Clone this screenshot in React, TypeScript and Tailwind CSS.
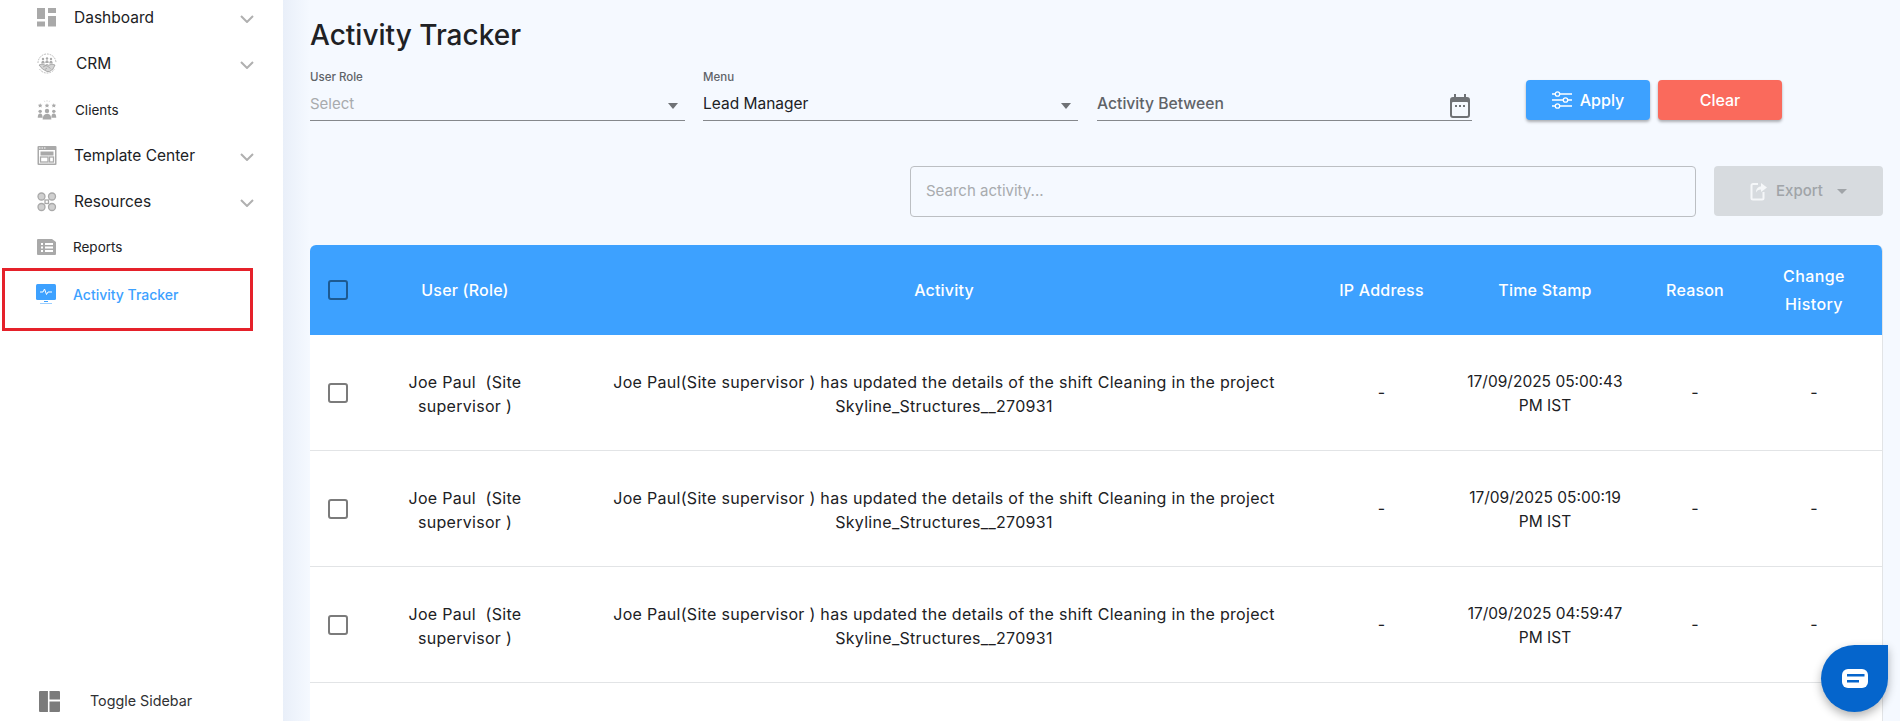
const font = "font-['Inter','Noto_Sans',sans-serif]";

const navItems = [
  { label: "Dashboard", icon: <DashboardIcon />, caret: true, labelClass: "ml-[17px] text-[15.500px]" },
  { label: "CRM", icon: <CrmIcon />, caret: true, labelClass: "ml-[19px] text-[15.500px]" },
  { label: "Clients", icon: <ClientsIcon />, caret: false, labelClass: "ml-[18px] text-[13.500px]" },
  { label: "Template Center", icon: <TemplateIcon />, caret: true, labelClass: "ml-[17px] text-[15.500px]" },
  { label: "Resources", icon: <ResourcesIcon />, caret: true, labelClass: "ml-[17px] text-[15.500px]" },
  { label: "Reports", icon: <ReportsIcon />, caret: false, labelClass: "ml-[16px] text-[13.500px]" },
];

const rows = ["17/09/2025 05:00:43", "17/09/2025 05:00:19", "17/09/2025 04:59:47", "17/09/2025 04:59:12"];

const tableCols = "grid grid-cols-[50px_210px_748px_127px_200px_100px_138px] items-center text-center";

function DashboardIcon() {
  return (
    <svg width="20" height="19" viewBox="0 0 20 19" fill="#a9a9a9">
      <rect x="0" y="0" width="8" height="11" />
      <rect x="11" y="0" width="8" height="5" />
      <rect x="0" y="13.500" width="8" height="5" />
      <rect x="11" y="8" width="8" height="10.500" />
    </svg>
  );
}

function CrmIcon() {
  return (
    <svg width="20" height="22" viewBox="0 0 20 22" fill="none" stroke="#b0b0b0">
      <path d="M1 10a9 9 0 0 1 18 0M2.500 16a9 9 0 0 0 15 0" strokeDasharray="1.800 1" strokeWidth="0.900" />
      <g fill="#a9a9a9" stroke="none">
        <circle cx="6" cy="6" r="1.200" />
        <circle cx="10" cy="5.500" r="1.200" />
        <circle cx="14" cy="6" r="1.200" />
        <path d="M4.300 10.500c0-1.800.7-2.800 1.700-2.800s1.700 1 1.700 2.800zM8.300 10c0-1.800.7-2.800 1.700-2.800s1.700 1 1.700 2.800zM12.300 10.500c0-1.800.7-2.800 1.700-2.800s1.700 1 1.700 2.800z" />
      </g>
      <path d="M2 12l3-.8 3.500 1 1.500-.7 1.500.7 3.500-1 3 .8-2 4-3.500 2.500h-2.500l-4.500-2.500z" fill="#d4d4d4" stroke="#999" strokeWidth="0.800" />
      <path d="M6 14l3-1.500 2 1 2.500 2M8 16.500l2-1.500" stroke="#999" strokeWidth="0.700" />
    </svg>
  );
}

function ClientsIcon() {
  return (
    <svg width="22" height="22" viewBox="0 0 22 22" fill="#a9a9a9">
      <path d="M3.500 3.500l.8 1.600 1.700.2-1.200 1.200.3 1.700-1.600-.8-1.600.8.3-1.700L1 5.300l1.700-.2zM11 3.500l.8 1.600 1.700.2-1.200 1.200.3 1.700-1.600-.8-1.600.8.3-1.700-1.200-1.200 1.700-.2zM18.500 3.500l.8 1.600 1.700.2-1.200 1.200.3 1.700-1.600-.8-1.600.8.3-1.700-1.200-1.200 1.700-.2z" />
      <path d="M11 0v2M8 .800l.8 1.500M14 .800l-.8 1.500" stroke="#c4c4c4" strokeWidth="0.600" />
      <circle cx="3.500" cy="12.500" r="1.900" />
      <circle cx="18.500" cy="12.500" r="1.900" />
      <circle cx="11" cy="12" r="2.400" />
      <path d="M.800 19.500c0-3 1-4.600 2.700-4.600s2.700 1.600 2.700 4.600zM15.800 19.500c0-3 1-4.600 2.700-4.600s2.700 1.600 2.700 4.600zM6.200 21.500c0-4.200 1.700-6.500 4.800-6.500s4.800 2.300 4.800 6.500z" />
    </svg>
  );
}

function TemplateIcon() {
  return (
    <svg width="20" height="20" viewBox="0 0 20 20">
      <rect x="0.500" y="0" width="19" height="19" rx="1" fill="#a9a9a9" />
      <rect x="2" y="4" width="16" height="13.500" fill="#fff" />
      <rect x="2" y="1.500" width="1.500" height="1" fill="#fff" />
      <rect x="4.500" y="1.500" width="1.500" height="1" fill="#fff" />
      <rect x="7" y="1.500" width="1.500" height="1" fill="#fff" />
      <rect x="3.500" y="5.500" width="13" height="4" fill="#a9a9a9" />
      <rect x="3.500" y="11" width="7.500" height="5" fill="none" stroke="#a9a9a9" strokeWidth="1.300" />
      <rect x="12.500" y="11" width="4" height="5" fill="none" stroke="#a9a9a9" strokeWidth="1.300" />
    </svg>
  );
}

function ResourcesIcon() {
  return (
    <svg width="20" height="20" viewBox="0 0 20 20" fill="none" stroke="#a9a9a9" strokeWidth="1.300">
      <circle cx="4.500" cy="4.500" r="3.500" fill="#d0d0d0" />
      <circle cx="15" cy="4.500" r="3.500" fill="#d0d0d0" />
      <circle cx="4.500" cy="15" r="3.500" fill="#d0d0d0" />
      <circle cx="15" cy="15" r="3.500" fill="#d0d0d0" />
      <rect x="8" y="8" width="3.500" height="3.500" />
    </svg>
  );
}

function ReportsIcon() {
  return (
    <svg width="20" height="16" viewBox="0 0 20 16">
      <path d="M0 1a1 1 0 0 1 1-1h14l4 3v12a1 1 0 0 1-1 1H1a1 1 0 0 1-1-1z" fill="#a9a9a9" />
      <path d="M4 4h2v2H4zM8 4h8v2H8zM4 7.500h2v2H4zM8 7.500h8v2H8zM4 11h2v2H4zM8 11h8v2H8z" fill="#fff" />
    </svg>
  );
}

function ActivityIcon() {
  return (
    <svg width="20" height="21" viewBox="0 0 20 21" className="-ml-[1px] shrink-0">
      <rect x="0" y="0" width="20" height="16" rx="1.500" fill="#3da1ff" />
      <path d="M4 8h3l1.500-3 2 5.500 1.500-2.500h4" fill="none" stroke="#fff" strokeWidth="1" />
      <rect x="8" y="17" width="4" height="1" fill="#3da1ff" />
      <rect x="4" y="19" width="12" height="1" fill="#9ccfff" />
    </svg>
  );
}

function Caret() {
  return (
    <svg width="14" height="8" viewBox="0 0 14 8" fill="none" stroke="#b0b0b0" strokeWidth="2" className="ml-auto mr-[1px] mt-[2px]">
      <path d="M1 1l6 6 6-6" />
    </svg>
  );
}

function SelectField({ label, value, muted }: { label: string; value: string; muted?: boolean }) {
  return (
    <div className="w-[375px]">
      <div className="text-[11.500px] font-medium leading-[14px] text-[#5f6368]">{label}</div>
      <div className="mt-[5px] flex h-[32px] items-center justify-between border-b border-[#85888c] pb-[1px]">
        <span className={muted ? "text-[15px] text-[#a8abae]" : "text-[15.500px] text-[#202124]"}>{value}</span>
        <span className="mr-[7px] mt-[3px] h-0 w-0 border-x-[5.500px] border-t-[6px] border-x-transparent border-t-[#6f7276]" />
      </div>
    </div>
  );
}

function Checkbox({ header }: { header?: boolean }) {
  return (
    <span
      className={
        header
          ? "mx-auto block h-[20px] w-[20px] translate-x-[3px] rounded-[3px] border-[2.500px] border-[#1d5a92]"
          : "mx-auto block h-[20px] w-[20px] translate-x-[3px] rounded-[3px] border-[2.500px] border-[#7b7b7b]"
      }
    />
  );
}

export default function App() {
  return (
    <div className={`${font} flex h-[721px] w-[1900px] overflow-hidden bg-[#f5f9ff] text-[#202124]`}>
      <aside className="relative flex h-full w-[283px] shrink-0 flex-col bg-white pl-[37px] pr-[28px]">
        <nav className="-mt-[5px] flex flex-col">
          {navItems.map((item) => (
            <div key={item.label} className="flex h-[45.900px] items-center">
              <span className="flex w-[20px] shrink-0 justify-center">{item.icon}</span>
              <span className={`text-[#202124] ${item.labelClass}`}>{item.label}</span>
              {item.caret && <Caret />}
            </div>
          ))}
          <div className="flex h-[48px] items-center">
            <ActivityIcon />
            <span className="ml-[17px] text-[14px] font-medium text-[#3da1ff]">Activity Tracker</span>
          </div>
        </nav>
        <div className="mt-auto mb-[9px] flex h-[22px] items-center">
          <svg width="21" height="21" viewBox="0 0 20 20" className="ml-[2px] shrink-0" fill="#7b7b7b">
            <path d="M1 0h7.500v20H1a1 1 0 0 1-1-1V1a1 1 0 0 1 1-1zM10 0h9a1 1 0 0 1 1 1v7H10zM10 10h10v9a1 1 0 0 1-1 1h-9z" />
          </svg>
          <span className="ml-[30px] text-[14.300px] text-[#303133]">Toggle Sidebar</span>
        </div>
        <div className="absolute left-[2px] top-[268px] h-[63px] w-[251px] border-[3px] border-[#e5212a]" />
      </aside>

      <div className="w-[27px] shrink-0 bg-gradient-to-r from-[#e9eff9] to-[#f5f9ff]" />

      <main className="w-[1573px] shrink-0">
        <h1 className="mt-[18px] text-[28px] font-medium leading-[34px] text-[#202124]">Activity Tracker</h1>

        <div className="mt-[18px] flex h-[51px]">
          <SelectField label="User Role" value="Select" muted />
          <div className="ml-[18px]">
            <SelectField label="Menu" value="Lead Manager" />
          </div>
          <div className="ml-[19px] flex w-[375px] items-end">
            <div className="flex h-[32px] w-full items-center justify-between border-b border-[#85888c] pb-[1px]">
              <span className="text-[15.700px] font-medium text-[#5f6368]">Activity Between</span>
              <svg width="20" height="24" viewBox="0 0 20 24" className="mr-[2px] mt-[3px]">
                <path d="M4 0h2v3h8V0h2v3h1a3 3 0 0 1 3 3v15a3 3 0 0 1-3 3H3a3 3 0 0 1-3-3V6a3 3 0 0 1 3-3h1z" fill="#6f7276" />
                <rect x="2" y="8" width="16" height="14" rx="1" fill="#f5f9ff" />
                <path d="M5 11h2v2H5zM9 11h2v2H9zM13 11h2v2h-2z" fill="#6f7276" />
              </svg>
            </div>
          </div>
          <button className="ml-[54px] mt-[10px] flex h-[40px] w-[124px] items-center justify-center gap-[8px] rounded-[4px] bg-[#3da1ff] text-[16px] font-medium text-white shadow-[0_2px_3px_rgba(0,0,0,0.3)]">
            <svg width="20" height="18" viewBox="0 0 20 18" fill="none" stroke="#fff" strokeWidth="1.300">
              <path d="M0 3h3M8 3h12M0 9h11M16 9h4M0 15h3M8 15h12" />
              <circle cx="5.500" cy="3" r="2.200" />
              <circle cx="13.500" cy="9" r="2.200" />
              <circle cx="5.500" cy="15" r="2.200" />
            </svg>
            Apply
          </button>
          <button className="ml-[8px] mt-[10px] h-[40px] w-[124px] rounded-[4px] bg-[#fa6a5c] text-[16px] font-medium text-white shadow-[0_2px_3px_rgba(0,0,0,0.3)]">
            Clear
          </button>
        </div>

        <div className="mt-[45px] flex justify-end gap-[18px]">
          <div className="flex h-[51px] w-[786px] items-center rounded-[4px] border border-[#bcbfc3] px-[15px] text-[15px] text-[#a8abae]">
            Search activity...
          </div>
          <button className="flex h-[50px] w-[169px] items-center justify-center gap-[8px] rounded-[4px] bg-[#d7dbdf] text-[15px] font-medium text-[#a0a4a8]">
            <svg width="18" height="20" viewBox="0 0 18 20" fill="none">
              <path d="M8 3H3a1.500 1.500 0 0 0-1.500 1.500v12.500A1.500 1.500 0 0 0 3 18.500h9a1.500 1.500 0 0 0 1.500-1.500V11" stroke="#f5f7f9" strokeWidth="2" />
              <path d="M11 2l6 4.500-6 4.500V8.500c-2.500 0-4 1-5 3 0-3.500 2-6 5-6z" fill="#f5f7f9" />
            </svg>
            Export
            <span className="ml-[6px] h-0 w-0 border-x-[5px] border-t-[5px] border-x-transparent border-t-[#a0a4a8]" />
          </button>
        </div>

        <div className="mt-[28px] overflow-hidden rounded-t-[6px] border-r border-[#e2e4e6] bg-white">
          <div className={`${tableCols} h-[90px] bg-[#3da1ff] text-[16px] font-medium leading-[28px] tracking-[0.2px] text-white`}>
            <Checkbox header />
            <span>User (Role)</span>
            <span>Activity</span>
            <span>IP Address</span>
            <span>Time Stamp</span>
            <span>Reason</span>
            <span className="mx-auto w-[76px] tracking-[0.4px]">Change History</span>
          </div>
          {rows.map((time) => (
            <div key={time} className={`${tableCols} h-[116px] border-b border-[#e2e4e6] text-[16px] leading-[24px]`}>
              <Checkbox />
              <span className="mx-auto w-[170px] translate-y-[1px] tracking-[0.3px]">Joe Paul &nbsp;(Site supervisor )</span>
              <span className="mx-auto w-[700px] translate-y-[1px] tracking-[0.3px]">
                Joe Paul(Site supervisor ) has updated the details of the shift Cleaning in the project Skyline_Structures__270931
              </span>
              <span className="-translate-y-[1px]">-</span>
              <span className="mx-auto w-[170px] translate-y-[1px] text-[15.500px]">{time} PM IST</span>
              <span className="-translate-y-[1px]">-</span>
              <span className="-translate-y-[1px]">-</span>
            </div>
          ))}
        </div>
      </main>

      <button className="absolute left-[1821px] top-[645px] flex h-[67px] w-[67px] items-center justify-center rounded-full rounded-tr-[8px] bg-[#0565cc] shadow-[0_4px_10px_rgba(0,0,0,0.3)]">
        <svg width="26" height="19" viewBox="0 0 26 19">
          <rect width="26" height="19" rx="6" fill="#fff" />
          <path d="M5 5h17.500v2.500H5zM5 11h12v2.500H5z" fill="#0565cc" />
        </svg>
      </button>
    </div>
  );
}
